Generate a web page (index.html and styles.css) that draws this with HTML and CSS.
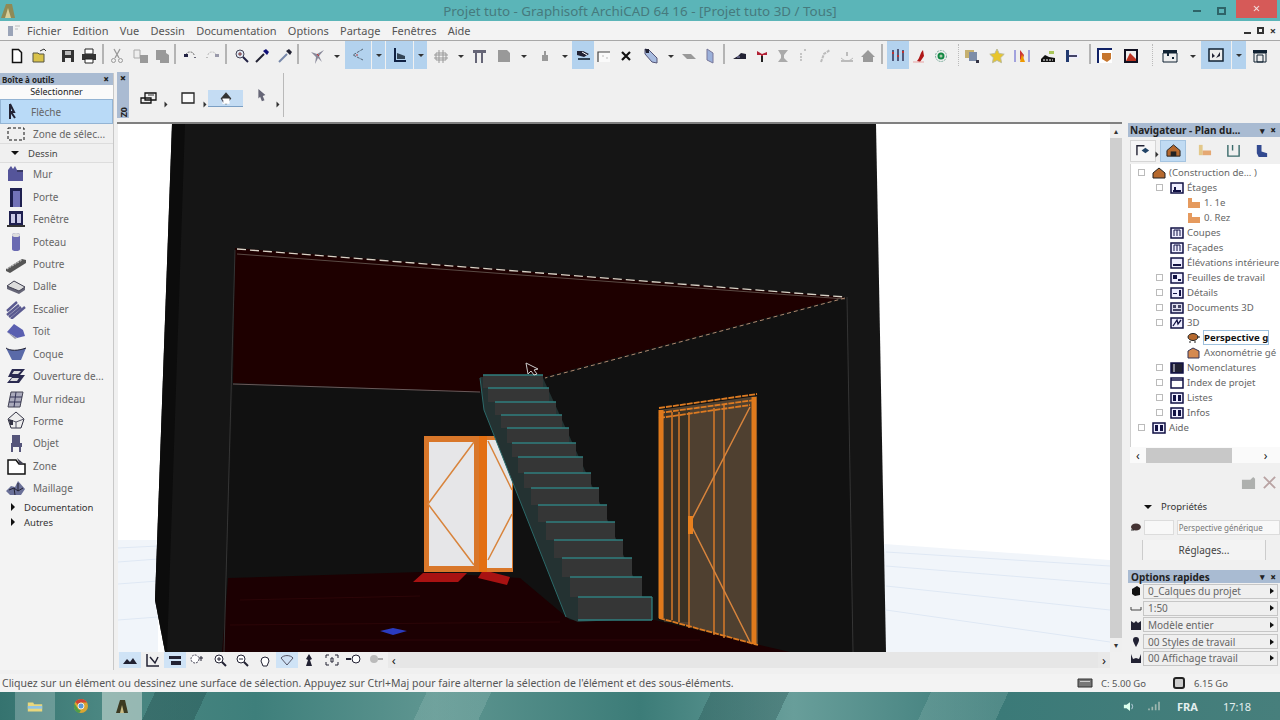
FILE: index.html
```html
<!DOCTYPE html>
<html lang="fr">
<head>
<meta charset="utf-8">
<title>Projet tuto - Graphisoft ArchiCAD 64 16</title>
<link rel="stylesheet" href="styles.css">
</head>
<body>
<div class="app">
  <header class="titlebar">
    <svg class="appicon" viewBox="0 0 16 16"><path d="M1 15 6 1h6l3 14z" fill="#8f8a55"/><path d="M5 15 8 5l3 10z" fill="#d8cf9a"/></svg>
    <div class="title">Projet tuto - Graphisoft ArchiCAD 64 16 - [Projet tuto 3D / Tous]</div>
    <div class="winctl">
      <span class="wmin"></span><span class="wmax"></span><span class="wclose">×</span>
    </div>
  </header>

  <nav class="menubar">
    <svg class="menuicon" viewBox="0 0 14 12"><path d="M1 1h5v10H1z" fill="#9aa4b8"/><path d="M8 1h5M8 4h3" stroke="#bbb"/></svg>
    <span>Fichier</span><span>Edition</span><span>Vue</span><span>Dessin</span><span>Documentation</span><span>Options</span><span>Partage</span><span>Fenêtres</span><span>Aide</span>
    <div class="mdictl"><i class="mdimin"></i><i class="mdimax"></i><i class="mdiclose">×</i></div>
  </nav>

  <div class="toolbar">
    <span class="b m8"><svg viewBox="0 0 16 16"><path d="M3.500 1.500h6l3 3v10h-9z" fill="#fff" stroke="#111" stroke-width="1.500"/></svg></span>
    <span class="b m5"><svg viewBox="0 0 16 16"><path d="M1 5h5l1 1h5v8H1z" fill="#d9c24a" stroke="#554"/><path d="M8 3l4-2 2 2" stroke="#333" fill="none"/></svg></span>
    <span class="b m10"><svg viewBox="0 0 16 16"><path d="M2 2h12v12H2z" fill="#333"/><path d="M5 3h6v4H5z" fill="#bbb"/><path d="M5 10h6v4H5z" fill="#eee"/></svg></span>
    <span class="b m3"><svg viewBox="0 0 16 16"><path d="M4 1h8v5H4z" fill="#fff" stroke="#222"/><path d="M1 6h14v6H1z" fill="#333"/><path d="M4 11h8v4H4z" fill="#fff" stroke="#222"/></svg></span>
    <span class="sep m4"></span>
    <span class="b m4 dim"><svg viewBox="0 0 16 16"><path d="M5 1l5 9M11 1l-5 9" stroke="#999" stroke-width="1.300"/><circle cx="4.500" cy="12.500" r="2" fill="none" stroke="#999"/><circle cx="11.500" cy="12.500" r="2" fill="none" stroke="#999"/></svg></span>
    <span class="b m6 dim"><svg viewBox="0 0 16 16"><path d="M1 2h6v8H1z" fill="#eee" stroke="#aaa"/><path d="M7 7h8v8H7z" fill="#999"/></svg></span>
    <span class="b m3 dim"><svg viewBox="0 0 16 16"><path d="M2 2h10v3l3 2v8H6v-3H2z" fill="#999"/></svg></span>
    <span class="sep m3"></span>
    <span class="b m5"><svg viewBox="0 0 16 16"><path d="M4 7a4 3 0 0 1 8 0" fill="none" stroke="#666" stroke-dasharray="2 1"/><path d="M2 6h4v3H2z" fill="#224"/><path d="M12 9h2v1h-2z" fill="#667"/></svg></span>
    <span class="b m4 dim"><svg viewBox="0 0 16 16"><path d="M4 7a4 3 0 0 1 8 0" fill="none" stroke="#bbb" stroke-dasharray="2 1"/><path d="M11 6h4v3h-4z" fill="#99a"/><path d="M2 9h2v1H2z" fill="#bbb"/></svg></span>
    <span class="sep m4"></span>
    <span class="b m6"><svg viewBox="0 0 16 16"><circle cx="6" cy="6" r="4" fill="#dfe8f4" stroke="#445"/><path d="M9 9l5 5" stroke="#224" stroke-width="2"/><path d="M4 6h4M6 4v4" stroke="#733"/></svg></span>
    <span class="b m2"><svg viewBox="0 0 16 16"><path d="M2 14l8-8" stroke="#223" stroke-width="2"/><path d="M9 3l4 4 2-3-3-3z" fill="#117"/></svg></span>
    <span class="b m5"><svg viewBox="0 0 16 16"><path d="M2 14l8-8" stroke="#78a" stroke-width="2"/><path d="M9 3l4 4 2-3-3-3z" fill="#223"/></svg></span>
    <span class="sep m3"></span>
    <span class="b m10"><svg viewBox="0 0 16 16"><path d="M1 4l6 2 7-4-5 6 3 6-4-4-3 6 1-7z" fill="#889"/><path d="M7 6l2 2" stroke="#c33"/></svg></span>
    <span class="dd m6"></span>
    <span class="bon split w26 m4"><svg viewBox="0 0 16 16"><path d="M13 2 3 8l10 5" fill="none" stroke="#567" stroke-dasharray="3 1"/><path d="M6 8h2" stroke="#b33"/></svg></span>
    <span class="bon ddon w13 m1"><i></i></span>
    <span class="bon split w27 m1"><svg viewBox="0 0 16 16"><path d="M3 1v13h11" fill="none" stroke="#124" stroke-width="2"/><path d="M5 6l8 3v3H5z" fill="#345"/></svg></span>
    <span class="bon ddon w13 m1"><i></i></span>
    <span class="b m5 dim"><svg viewBox="0 0 16 16"><path d="M3 5h10v7H3zM1 7h14M1 10h14M6 2v13M10 2v13" fill="none" stroke="#999"/></svg></span>
    <span class="dd m7"></span>
    <span class="b m5"><svg viewBox="0 0 16 16"><path d="M2 2h13v3H12v10h-2V5H6v10H4V5H2z" fill="#667"/></svg></span>
    <span class="b m7 dim"><svg viewBox="0 0 16 16"><path d="M2 2h9l3 3v9H2z" fill="#999"/></svg></span>
    <span class="dd m7"></span>
    <span class="b m8 dim"><svg viewBox="0 0 16 16"><path d="M7 3h2v4h2v6H5V7h2z" fill="#999"/></svg></span>
    <span class="dd m7"></span>
    <span class="bon w22 m3"><svg viewBox="0 0 16 16"><path d="M2 4h6l6 3-5 3-7-2z" fill="#223"/><path d="M3 12h12" stroke="#345" stroke-width="2"/><path d="M7 5l5 3" stroke="#fff"/></svg></span>
    <span class="b m1"><svg viewBox="0 0 16 16"><path d="M2 4h12v10H2z" fill="#fafafa"/><path d="M2 14V4h12" fill="none" stroke="#444" stroke-width="1.200"/><path d="M6 8h2M10 10h2" stroke="#bbb"/></svg></span>
    <span class="b m4"><svg viewBox="0 0 16 16"><path d="M4 4l8 8M12 4l-8 8" stroke="#111" stroke-width="2.200"/></svg></span>
    <span class="b m7"><svg viewBox="0 0 16 16"><path d="M2 1l4 1 8 8v5l-5-1-7-8z" fill="#a8bce0" stroke="#557"/><path d="M2 1h4v4H3z" fill="#223"/></svg></span>
    <span class="dd m7"></span>
    <span class="b m5 dim"><svg viewBox="0 0 16 16"><path d="M1 6h9l5 5H6z" fill="#999"/></svg></span>
    <span class="b m3"><svg viewBox="0 0 16 16"><path d="M5 1l6 4v10l-6-3z" fill="#9bb0da" stroke="#779"/></svg></span>
    <span class="sep m4"></span>
    <span class="b m6"><svg viewBox="0 0 16 16"><path d="M1 11l5-3 3-3 5 1v5H6z" fill="#223"/><path d="M5 9h3" stroke="#99c"/></svg></span>
    <span class="b m4"><svg viewBox="0 0 16 16"><path d="M3 3l5 3 5-2v3H9v7H7V7H3z" fill="#b22236"/><path d="M7 8h2v6H7z" fill="#222"/></svg></span>
    <span class="b m3 dim"><svg viewBox="0 0 16 16"><path d="M3 2h10l-4 5v3l4 4H3l3-4V7z" fill="#aaa"/></svg></span>
    <span class="b dim"><svg viewBox="0 0 16 16"><path d="M8 5v9M12 1v2" stroke="#999" stroke-dasharray="2 1"/></svg></span>
    <span class="b m6 dim"><svg viewBox="0 0 16 16"><path d="M4 14l3-8 6-4" stroke="#bbb" stroke-width="2" fill="none" stroke-dasharray="3 1"/></svg></span>
    <span class="b m4 dim"><svg viewBox="0 0 16 16"><path d="M8 4v4M2 13h12" stroke="#aaa" stroke-width="1.500"/><path d="M2 10q6 6 12 0" fill="none" stroke="#bbb"/></svg></span>
    <span class="b m3 dim"><svg viewBox="0 0 16 16"><path d="M8 2l7 7h-2v5H3V9H1z" fill="#999"/></svg></span>
    <span class="sep m4"></span>
    <span class="bon w22 m4"><svg viewBox="0 0 16 16"><path d="M3 3v11M8 2v12M13 3v11" stroke="#335" stroke-width="1.500"/><path d="M2 6h2M7 9h2M12 5h2" stroke="#b33" stroke-width="2"/></svg></span>
    <span class="b m2"><svg viewBox="0 0 16 16"><path d="M5 13c3-3 3-8 6-11l1 6-4 6z" fill="#b01818"/><path d="M1 14h11" stroke="#e9a3a3"/></svg></span>
    <span class="b m3"><svg viewBox="0 0 16 16"><circle cx="8" cy="8" r="5.500" fill="none" stroke="#7a9" stroke-dasharray="2 1"/><circle cx="8" cy="8" r="3.500" fill="#184"/><circle cx="8" cy="8" r="1.500" fill="#aca"/></svg></span>
    <span class="dots m8"></span>
    <span class="b m3"><svg viewBox="0 0 16 16"><path d="M1 2h9v8H1z" fill="#c5b070"/><path d="M5 4h8v9H5z" fill="#7d8da8"/><path d="M12 12h3v3h-3z" fill="#334"/></svg></span>
    <span class="b m7"><svg viewBox="0 0 16 16"><path d="M8 1l2.200 4.500 5 .7-3.600 3.500.9 5L8 12.400 3.500 14.700l.9-5L.8 6.200l5-.7z" fill="#e8c52c" stroke="#bb9"/></svg></span>
    <span class="b m7"><svg viewBox="0 0 16 16"><path d="M1 2h14v12H1z" fill="#eee"/><path d="M1 2v12M15 2v12" stroke="#55c"/><path d="M6 2l4 5-2 7-2-3z" fill="#c33"/><path d="M8 6l3 8H6z" fill="#e90"/></svg></span>
    <span class="b m8"><svg viewBox="0 0 16 16"><path d="M1 14v-3l4-4 4 2 6 1v4z" fill="#111"/><path d="M3 12h10" stroke="#fff" stroke-dasharray="2 1"/><path d="M9 3h5v3H9z" fill="#a9c65a"/></svg></span>
    <span class="b m6"><svg viewBox="0 0 16 16"><path d="M2 2h3v12H2z" fill="#223a70"/><path d="M5 6h10v4H5z" fill="#eef"/><path d="M5 7h8v2H5z" fill="#446"/></svg></span>
    <span class="sep m8"></span>
    <span class="b m5"><svg viewBox="0 0 16 16"><path d="M1 1h14v14H1z" fill="#fff"/><path d="M1 15V1h14" fill="none" stroke="#126" stroke-width="2"/><path d="M5 5h9v6l-4 3-5-3z" fill="#c6762e"/></svg></span>
    <span class="b m8"><svg viewBox="0 0 16 16"><path d="M1 1h14v14H1z" fill="#112"/><path d="M3 3h10v10H3z" fill="#eee"/><path d="M3 13l4-8 6 6v2z" fill="#b32"/></svg></span>
    <span class="dots m12"></span>
    <span class="b m7"><svg viewBox="0 0 16 16"><path d="M1 2h14v3H1z" fill="#123"/><path d="M1 5h14v9H1z" fill="#eee" stroke="#123"/><path d="M6 5v3M11 9v2" stroke="#123" stroke-width="2"/></svg></span>
    <span class="dd m10"></span>
    <span class="bon split w30 m4"><svg viewBox="0 0 16 16"><path d="M1 2h14v12H1z" fill="#eee" stroke="#123" stroke-width="1.500"/><path d="M4 6v5l3-2zM8 11l4-6v4z" fill="#223"/></svg></span>
    <span class="bon ddon w14 m1"><i></i></span>
    <span class="b m5"><svg viewBox="0 0 16 16"><path d="M1 2h14v3H1z" fill="#123"/><path d="M2 5h12v9H2z" fill="#eee" stroke="#123"/><path d="M5 7h6v7H5z" fill="none" stroke="#123"/></svg></span>
  </div>

  <main class="content">
    <aside class="toolbox">
      <div class="palhead"><span>Boîte à outils</span><b>×</b></div>
      <div class="grouptitle">Sélectionner</div>
      <div class="tool sel"><svg viewBox="0 0 20 20"><path d="M5 2v15M5 2l4 8h-3l4 6" fill="none" stroke="#223" stroke-width="2"/></svg><span>Flèche</span></div>
      <div class="tool zone"><svg viewBox="0 0 20 20"><path d="M2 4h16v12H2z" fill="none" stroke="#111" stroke-dasharray="3 2"/></svg><span>Zone de sélec...</span></div>
      <div class="section"><i class="tridown"></i><span>Dessin</span></div>
      <div class="tool"><svg viewBox="0 0 20 20"><path d="M2 6l3-4 2 3 2-3 2 4h6v11H2z" fill="#55559a"/><path d="M11 7h6" stroke="#223"/></svg><span>Mur</span></div>
      <div class="tool"><svg viewBox="0 0 20 20"><path d="M4 1h12v19H4z" fill="#1f2050"/><path d="M7 4h7v16H7z" fill="#7272b8"/></svg><span>Porte</span></div>
      <div class="tool"><svg viewBox="0 0 20 20"><path d="M3 2h14v15H3z" fill="#1f2050"/><path d="M5 5h4v9H5zM11 5h4v9h-4z" fill="#c9c9e6"/><path d="M1 16h18v2H1z" fill="#333"/></svg><span>Fenêtre</span></div>
      <div class="tool"><svg viewBox="0 0 20 20"><path d="M6 3a4 2 0 0 1 8 0v14a4 2 0 0 1-8 0z" fill="#6a6ab2"/><ellipse cx="10" cy="3" rx="4" ry="2" fill="#ddd"/></svg><span>Poteau</span></div>
      <div class="tool"><svg viewBox="0 0 20 20"><path d="M0 15 16 5l4 1v3L4 19l-4-2z" fill="#555"/><path d="M1 15 16 6" stroke="#ddd" stroke-dasharray="2 1"/></svg><span>Poutre</span></div>
      <div class="tool"><svg viewBox="0 0 20 20"><path d="M1 10l7-5 11 6v3l-6 4L1 13z" fill="#667"/><path d="M1 10l7-5 11 6-6 4z" fill="#ddd" stroke="#445"/></svg><span>Dalle</span></div>
      <div class="tool"><svg viewBox="0 0 20 20"><path d="M1 16l12-10M3 18l12-10M5 20l14-12M1 12l10-9" stroke="#5a5a90" stroke-width="2.400"/></svg><span>Escalier</span></div>
      <div class="tool"><svg viewBox="0 0 20 20"><path d="M1 11 8 3l9 6 2 6-8 2z" fill="#5a5fb0"/><path d="M1 11l10 6-2 1z" fill="#99a"/></svg><span>Toit</span></div>
      <div class="tool"><svg viewBox="0 0 20 20"><path d="M0 4c4 3 12 3 20 0l-5 12H6z" fill="#5a6aa8"/><path d="M0 4c4 3 12 3 20 0" stroke="#223" fill="none"/></svg><span>Coque</span></div>
      <div class="tool"><svg viewBox="0 0 20 20"><path d="M6 3h13l-5 6h5l-6 8H1l5-6H2z" fill="#2a2a50"/><path d="M8 5h7l-3 3H6zM6 12h7l-2 3H4z" fill="#ddd"/></svg><span>Ouverture de...</span></div>
      <div class="tool"><svg viewBox="0 0 20 20"><path d="M5 3h12l-3 15H2z" fill="#aab" stroke="#445"/><path d="M10 3 8 18M4 8h12M3 13h12" stroke="#335"/></svg><span>Mur rideau</span></div>
      <div class="tool"><svg viewBox="0 0 20 20"><path d="M10 1l8 7-3 9H5L2 8z" fill="#eee" stroke="#334"/><path d="M2 8l8 3 8-3M10 11v6" stroke="#556" fill="none"/><path d="M3 9h4v5H4z" fill="#334"/></svg><span>Forme</span></div>
      <div class="tool"><svg viewBox="0 0 20 20"><path d="M6 2h8v8h2v4h-1v5h-2v-5H7v5H5v-9h1z" fill="#55557a"/></svg><span>Objet</span></div>
      <div class="tool"><svg viewBox="0 0 20 20"><path d="M2 4h8l3 4h6v10H2z" fill="#fff" stroke="#111" stroke-width="1.500"/><path d="M11 2l6 5-3 2z" fill="#445"/></svg><span>Zone</span></div>
      <div class="tool"><svg viewBox="0 0 20 20"><path d="M0 13l5-5 4 1 3-6 7 8-4 6H4z" fill="#6a7098"/><path d="M3 12l5-2 4 3 5-3M8 10l1 7M12 5v8" stroke="#223" fill="none"/></svg><span>Maillage</span></div>
      <div class="section flat"><i class="triright"></i><span>Documentation</span></div>
      <div class="section flat"><i class="triright"></i><span>Autres</span></div>
    </aside>

    <section class="center">
      <div class="infobar">
        <div class="infohandle"><b>×</b><span>Z0</span></div>
        <span class="ib"><svg viewBox="0 0 18 14"><path d="M5 2h11v7H5zM1 7h10v5H1z" fill="none" stroke="#111" stroke-width="1.300"/><path d="M8 4h6" stroke="#333"/></svg></span><i class="tri"></i>
        <span class="ib g1"><svg viewBox="0 0 18 14"><path d="M3 2h12v10H3z" fill="#fafafa" stroke="#222" stroke-width="1.300"/></svg></span><i class="tri"></i>
        <span class="ib act"><svg viewBox="0 0 18 16"><path d="M9 1l6 7-6 7-6-7z" fill="#333"/><path d="M5 8h8v6H5z" fill="#fff"/><path d="M3 8l3 2v3z" fill="#556"/></svg></span>
        <span class="ib g2"><svg viewBox="0 0 18 16"><path d="M6 1l8 7-3 1 2 5-3 1-2-5-2 2z" fill="#667"/></svg></span><i class="tri"></i>
        <span class="vsep"></span>
      </div>
      <div class="viewrow">
        <div class="viewcol">
          <svg class="scene" viewBox="118 124 992 528" preserveAspectRatio="none" role="img" aria-label="Vue 3D">
            <rect x="118" y="124" width="992" height="528" fill="#fff"/>
            <path d="M118 540h40v112h-40zM884 544l226 16v92H884z" fill="#f1f5fa"/>
            <path d="M118 548l40-2M118 562l40-3M118 584l40-3M118 620l40-3M886 552l224 14M886 566l224 18M886 586l224 24M886 610l224 32" stroke="#dfe8f4" fill="none"/>
            <path d="M172 124h704l10 528H165l-10-52z" fill="#151515"/>
            <path d="M172 124h13l-18 528h-2l-10-52z" fill="#0c0c0c"/>
            <path d="M233 383 480 392 540 378 847 297l6 355H224z" fill="#111"/>
            <path d="M235 248 845 297 540 378 480 392 233 383z" fill="#1e0000"/>
            <path d="M228 578 420 572 520 578 570 620 655 620 760 645 790 652H222z" fill="#1c0002"/>
            <path d="M235 250 224 652M847 297 853 652" stroke="#353535" fill="none"/>
            <path d="M237 249 845 297" stroke="#d8d2c6" stroke-width="1.300" stroke-dasharray="9 4"/>
            <path d="M237 254 845 299" stroke="#5a4a44"/>
            <path d="M845 298 545 378" stroke="#b08a70" stroke-dasharray="4 3"/>
            <path d="M233 384 480 392" stroke="#6a5a5a"/>
            <path d="M240 600 420 596M230 625 560 622M300 640 700 640" stroke="#2c0508"/>
            <path d="M380 631l13-3 14 3-14 4z" fill="#2a3bc0"/>
            <path d="M413 582l10-9h44l-9 9zM478 578l5-8 27 7-3 8z" fill="#a81212"/>
            <path d="M424 436h89v136h-89z" fill="#d9772a"/>
            <path d="M429 442h45v124h-45zM487 440h25v128h-25z" fill="#e6e6e8"/>
            <path d="M474 442 428 504 474 565M488 441 512 490M488 560 512 514" stroke="#d8843c" stroke-width="1.500" fill="none"/>
            <path d="M479 436h8v136h-8z" fill="#e36f12"/>
            <path d="M659 410 757 396 758 645 659 618z" fill="#4f4030"/>
            <path d="M664 410h26v212h-26z" fill="#3b3225"/>
            <path d="M659 408 757 394M659 413 755 400M659 418 750 405M659 618 758 645" stroke="#dd7b22" stroke-width="1.800" fill="none" stroke-dasharray="6 1"/>
            <path d="M672 412v208M679 412v210M689 412v216M714 408v227M724 405v233" stroke="#d77a28" fill="none" stroke-width="1.500"/>
            <path d="M661 410v208" stroke="#e07a1c" stroke-width="5"/>
            <path d="M754 397v247" stroke="#e07a1c" stroke-width="5"/>
            <path d="M750 407 690 523 750 642" stroke="#d8843c" stroke-width="1.500" fill="none"/>
            <path d="M688 516h5v18h-5z" fill="#e8801e"/>
            <path d="M480 377 543 378 652 618 578 622 566 617 484 410z" fill="#243232"/>
            <path d="M480 378 484 410 566 617" stroke="#2c6a6a" fill="none"/>
            <g class="steps">
              <rect x="483" y="375" width="60" height="13"/><rect x="488" y="388" width="61" height="14"/><rect x="495" y="402" width="61" height="13"/>
              <rect x="501" y="415" width="61" height="13"/><rect x="507" y="428" width="62" height="15"/><rect x="512" y="443" width="64" height="14"/>
              <rect x="518" y="457" width="65" height="16"/><rect x="524" y="473" width="67" height="15"/><rect x="531" y="488" width="68" height="17"/>
              <rect x="538" y="505" width="69" height="17"/><rect x="546" y="522" width="69" height="18"/><rect x="554" y="540" width="69" height="18"/>
              <rect x="562" y="558" width="70" height="19"/><rect x="570" y="577" width="72" height="20"/><rect x="578" y="597" width="74" height="23"/>
            </g>
            <path class="nosings" d="M483 375h60M488 388h61M495 402h61M501 415h61M507 428h62M512 443h64M518 457h65M524 473h67M531 488h68M538 505h69M546 522h69M554 540h69M562 558h70M570 577h72M578 597h74M578 620h74M652 597v23"/>
            <path d="M526 363l2 11 3-3 3 4 3-1-3-4 4-1z" fill="none" stroke="#ccc"/>
          </svg>
          <div class="viewbar">
            <span class="vb on"><svg viewBox="0 0 16 14"><path d="M1 11l4-5 3 3 3-4 4 6z" fill="#223"/></svg></span>
            <span class="vb"><svg viewBox="0 0 16 14"><path d="M2 1v12h12M5 4l5 6 3-6" fill="none" stroke="#223" stroke-width="1.500"/></svg></span>
            <span class="vb on"><svg viewBox="0 0 16 14"><path d="M2 3h12v3H2zM4 8h10v4H4z" fill="#223"/></svg></span>
            <span class="vb"><svg viewBox="0 0 16 14"><circle cx="6" cy="6" r="4" fill="#fff" stroke="#445" stroke-dasharray="2 1"/><path d="M12 3v5M10 5h4" stroke="#223"/></svg></span>
            <span class="vb"><svg viewBox="0 0 16 14"><circle cx="7" cy="6" r="4" fill="#fff" stroke="#223"/><path d="M5 6h4M7 4v4" stroke="#223"/><path d="M10 9l4 4" stroke="#223" stroke-width="2"/></svg></span>
            <span class="vb"><svg viewBox="0 0 16 14"><circle cx="7" cy="6" r="4" fill="#fff" stroke="#223"/><path d="M5 6h4" stroke="#223"/><path d="M10 9l4 4" stroke="#223" stroke-width="2"/></svg></span>
            <span class="vb"><svg viewBox="0 0 16 14"><path d="M4 8a4 4 0 1 1 8 0l-2 5H6z" fill="#fff" stroke="#223"/></svg></span>
            <span class="vb on"><svg viewBox="0 0 16 14"><path d="M2 5a7 5 0 0 1 12 0l-6 7z" fill="#cfe0f4" stroke="#556"/></svg></span>
            <span class="vb"><svg viewBox="0 0 16 14"><path d="M8 1l3 5-2 1 2 6H5l2-6-2-1z" fill="#223"/></svg></span>
            <span class="vb"><svg viewBox="0 0 16 14"><path d="M2 2h3M11 2h3M2 12h3M11 12h3M2 2v3M14 2v3M2 9v3M14 9v3M7 5h2v4H7z" stroke="#223" fill="none"/></svg></span>
            <span class="vb"><svg viewBox="0 0 16 14"><circle cx="10" cy="6" r="4" fill="#fff" stroke="#223"/><path d="M0 6h5" stroke="#223" stroke-width="2"/></svg></span>
            <span class="vb"><svg viewBox="0 0 16 14"><circle cx="6" cy="6" r="4" fill="#bbb"/><path d="M10 6h5" stroke="#aaa" stroke-width="2"/></svg></span>
            <span class="arrow">‹</span>
            <div class="htrack"></div>
            <span class="arrow">›</span>
          </div>
        </div>
        <div class="vscroll"><span>▴</span><div class="vthumb"></div><span>▾</span></div>
      </div>
    </section>

    <aside class="rightpanel">
      <div class="palhead navhead"><span>Navigateur - Plan du...</span><em>▾</em><b>×</b></div>
      <div class="navtabs">
        <span class="nt box"><svg viewBox="0 0 18 16"><path d="M2 13V3h8" fill="none" stroke="#223" stroke-width="1.500"/><path d="M7 8l4-3 4 3-4 3z" fill="#246"/></svg></span><i class="tri"></i>
        <span class="nt on"><svg viewBox="0 0 18 16"><path d="M2 8l7-6 7 6v6H2z" fill="#b5692e" stroke="#222"/><path d="M6 9h6v5H6z" fill="#222"/></svg></span>
        <span class="nt m5"><svg viewBox="0 0 18 16"><path d="M3 2h4v11H3z" fill="#e3c88a"/><path d="M7 8h9v5H7z" fill="#e5a873"/></svg></span>
        <span class="nt m3"><svg viewBox="0 0 18 16"><path d="M3 2v12h12V2M8 2v6" fill="none" stroke="#3a6a6a" stroke-width="1.500"/></svg></span>
        <span class="nt m2"><svg viewBox="0 0 18 16"><path d="M4 2h5v7l6 2v4H6l-2-4z" fill="#334a90"/></svg></span>
      </div>
      <div class="tree">
        <div class="row l0"><i class="exp"></i><svg viewBox="0 0 14 12"><path d="M1 6l6-5 6 5v5H1z" fill="#b5692e" stroke="#222"/></svg><span>(Construction de... )</span></div>
        <div class="row l1"><i class="exp"></i><svg class="pl" viewBox="0 0 14 12"><path d="M1 1h12v10H1z" fill="#eef" stroke="#114" stroke-width="1.500"/><path d="M3 8h8v2H3z" fill="#114"/><path d="M4 5h2v3H4z" fill="#114"/></svg><span>Étages</span></div>
        <div class="row l2"><svg viewBox="0 0 14 12"><path d="M1 1h4v4h8v6H1z" fill="#e59a5e"/></svg><span>1. 1e</span></div>
        <div class="row l2"><svg viewBox="0 0 14 12"><path d="M1 1h4v4h8v6H1z" fill="#e59a5e"/></svg><span>0. Rez</span></div>
        <div class="row l1 noexp"><svg class="pl" viewBox="0 0 14 12"><path d="M1 1h12v10H1z" fill="#eef" stroke="#114" stroke-width="1.500"/><path d="M4 3v6M10 3v6M4 3h6M7 3v6" stroke="#114"/></svg><span>Coupes</span></div>
        <div class="row l1 noexp"><svg class="pl" viewBox="0 0 14 12"><path d="M1 1h12v10H1z" fill="#eef" stroke="#114" stroke-width="1.500"/><path d="M4 3v6M10 3v6M4 3h6M7 3v6" stroke="#114"/></svg><span>Façades</span></div>
        <div class="row l1 noexp"><svg class="pl" viewBox="0 0 14 12"><path d="M1 1h12v10H1z" fill="#eef" stroke="#114" stroke-width="1.500"/><path d="M3 7h8v2H3z" fill="#114"/></svg><span>Élévations intérieure</span></div>
        <div class="row l1"><i class="exp"></i><svg class="pl" viewBox="0 0 14 12"><path d="M1 1h12v10H1z" fill="#eef" stroke="#114" stroke-width="1.500"/><path d="M3 3h4v4H3zM8 7h3v2H8z" fill="#114"/></svg><span>Feuilles de travail</span></div>
        <div class="row l1"><i class="exp"></i><svg class="pl" viewBox="0 0 14 12"><path d="M1 1h12v10H1z" fill="#eef" stroke="#114" stroke-width="1.500"/><path d="M3 6h4v1H3zM9 3h2v6H9z" fill="#114"/></svg><span>Détails</span></div>
        <div class="row l1"><i class="exp"></i><svg class="pl" viewBox="0 0 14 12"><path d="M1 1h12v10H1z" fill="#dde" stroke="#114" stroke-width="1.500"/><path d="M3 3h3v3H3zM8 3h3v3H8zM3 7h8v2H3z" fill="#446"/></svg><span>Documents 3D</span></div>
        <div class="row l1"><i class="exp"></i><svg class="pl" viewBox="0 0 14 12"><path d="M1 1h12v10H1z" fill="#eef" stroke="#114" stroke-width="1.500"/><path d="M3 9l4-6 1 4 3-4" stroke="#114" fill="none" stroke-width="1.300"/></svg><span>3D</span></div>
        <div class="row l2 cur"><svg viewBox="0 0 14 12"><ellipse cx="6" cy="5" rx="5" ry="3.500" fill="#b5692e" stroke="#222"/><path d="M2 10h2M7 10h2M10 5h3" stroke="#222"/></svg><span>Perspective g</span></div>
        <div class="row l2"><svg viewBox="0 0 14 12"><path d="M1 4l5-3 6 3v7H1z" fill="#d58a50" stroke="#335"/></svg><span>Axonométrie gé</span></div>
        <div class="row l1"><i class="exp"></i><svg class="pl" viewBox="0 0 14 12"><path d="M1 1h12v10H1z" fill="#223" stroke="#114" stroke-width="1.500"/><path d="M4 2v8" stroke="#eef"/></svg><span>Nomenclatures</span></div>
        <div class="row l1"><i class="exp"></i><svg class="pl" viewBox="0 0 14 12"><path d="M1 1h12v10H1z" fill="#fff" stroke="#114" stroke-width="1.500"/><path d="M1 3h12" stroke="#114" stroke-width="1.500"/></svg><span>Index de projet</span></div>
        <div class="row l1"><i class="exp"></i><svg class="pl" viewBox="0 0 14 12"><path d="M1 1h12v10H1z" fill="#eef" stroke="#114" stroke-width="1.500"/><path d="M3 3h3v6H3zM8 3h3v6H8z" fill="#114"/></svg><span>Listes</span></div>
        <div class="row l1"><i class="exp"></i><svg class="pl" viewBox="0 0 14 12"><path d="M1 1h12v10H1z" fill="#eef" stroke="#114" stroke-width="1.500"/><path d="M3 3h3v6H3zM8 3h3v6H8z" fill="#114"/></svg><span>Infos</span></div>
        <div class="row l0"><i class="exp"></i><svg class="pl" viewBox="0 0 14 12"><path d="M1 1h12v10H1z" fill="#eef" stroke="#114" stroke-width="1.500"/><path d="M3 3h3v6H3zM8 3h3v6H8z" fill="#114"/></svg><span>Aide</span></div>
      </div>
      <div class="hscroll"><span>‹</span><div class="hthumb"></div><span>›</span></div>
      <div class="props">
        <div class="propbtns">
          <svg viewBox="0 0 16 16"><path d="M1 5h9l3-3 2 2v11H1z" fill="#aeb0ae"/></svg>
          <svg viewBox="0 0 16 16"><path d="M2 2l12 12M14 2 2 14" stroke="#b9a3a3" stroke-width="2"/></svg>
        </div>
        <div class="section"><i class="tridown"></i><span>Propriétés</span></div>
        <div class="propfields">
          <svg viewBox="0 0 12 10"><ellipse cx="6" cy="5" rx="5" ry="3.500" fill="#433"/><path d="M1 8h3" stroke="#222"/></svg>
          <span class="fshort"></span><span class="flong">Perspective générique</span>
        </div>
        <div class="propbtn">Réglages...</div>
      </div>
      <div class="palhead quickhead"><span>Options rapides</span><em>▾</em><b>×</b></div>
      <div class="quick">
        <div class="qrow"><svg viewBox="0 0 12 12"><path d="M2 4l5-3 3 2v7l-5 1-3-2z" fill="#111"/></svg><div class="qsel"><span>0_Calques du projet</span><i></i></div></div>
        <div class="qrow"><svg viewBox="0 0 12 12"><path d="M1 5v3h10V5" fill="none" stroke="#444"/></svg><div class="qsel"><span>1:50</span><i></i></div></div>
        <div class="qrow"><svg viewBox="0 0 12 12"><path d="M1 2l3 2 2-2 2 2 3-2v9H1z" fill="#223"/></svg><div class="qsel"><span>Modèle entier</span><i></i></div></div>
        <div class="qrow"><svg viewBox="0 0 12 12"><path d="M6 1a3 3 0 0 1 3 3c0 2-3 7-3 7S3 6 3 4a3 3 0 0 1 3-3z" fill="#223"/></svg><div class="qsel"><span>00 Styles de travail</span><i></i></div></div>
        <div class="qrow"><svg viewBox="0 0 12 12"><path d="M1 2l2 5 3-1 3 1 2-5v9H1z" fill="#223"/></svg><div class="qsel"><span>00 Affichage travail</span><i></i></div></div>
      </div>
    </aside>
  </main>

  <footer class="statusbar">
    <span class="stext">Cliquez sur un élément ou dessinez une surface de sélection. Appuyez sur Ctrl+Maj pour faire alterner la sélection de l'élément et des sous-éléments.</span>
    <svg class="disk" viewBox="0 0 16 10"><path d="M1 1h14v8H1z" fill="#777" stroke="#333"/><path d="M3 3h10v1H3z" fill="#ccc"/></svg>
    <span class="sval">C: 5.00 Go</span>
    <svg class="ram" viewBox="0 0 14 14"><rect x="2" y="2" width="10" height="10" rx="2" fill="#ccc" stroke="#222" stroke-width="2"/></svg>
    <span class="sval">6.15 Go</span>
  </footer>

  <div class="taskbar">
    <span class="task first"><svg viewBox="0 0 20 16"><path d="M2 4h6l1 2h9v8H2z" fill="#e9d77c"/><path d="M2 8h16v3H2z" fill="#8fc4e6"/></svg></span>
    <span class="task plain"><svg viewBox="0 0 16 16"><circle cx="8" cy="8" r="7" fill="#d9a632"/><path d="M8 1a7 7 0 0 1 6 3.500H8A3.500 3.500 0 0 0 4.800 6.500L2.200 3.800A7 7 0 0 1 8 1z" fill="#cf4436"/><path d="M1.500 5.500 5 11a4 4 0 0 0 3 1.500L6 15A7 7 0 0 1 1.500 5.500z" fill="#4f9e48"/><circle cx="8" cy="8" r="3" fill="#5b9ad6" stroke="#eee"/></svg></span>
    <span class="task open"><svg viewBox="0 0 16 16"><path d="M2 15 6 2h5l3 13z" fill="#3c3a22"/><path d="M6 15l2-8 2 8z" fill="#c8bb84"/></svg></span>
    <div class="tray">
      <svg class="vol" viewBox="0 0 16 12"><path d="M1 4h3l4-3v10L4 8H1z" fill="#dfe"/><path d="M10 3q2 3 0 6" stroke="#cde" fill="none"/></svg>
      <svg class="net" viewBox="0 0 16 12"><path d="M1 9h2v2H1zM5 7h2v4H5zM9 4h2v7H9zM13 1h2v10h-2z" fill="#9fb8b0"/></svg>
      <span class="lang">FRA</span>
      <span class="clock">17:18</span>
    </div>
  </div>
</div>
</body>
</html>
```
FILE: styles.css
```css
* { box-sizing: border-box; }
html, body { margin: 0; height: 100%; }
body { width: 1280px; height: 720px; overflow: hidden; font-family: "Noto Sans", "Liberation Sans", sans-serif; font-size: 10px; color: #333; background: #f0f0f0; }
svg { display: block; }
.app { display: flex; flex-direction: column; width: 1280px; height: 720px; filter: blur(0.6px); }

.titlebar { height: 21px; flex: none; background: #5bb5b8; display: flex; align-items: center; position: relative; }
.appicon { width: 16px; height: 16px; margin-left: 0; }
.title { position: absolute; left: 0; right: 0; text-align: center; font-size: 13.400px; color: #467a7d; }
.winctl { margin-left: auto; display: flex; align-items: center; position: relative; }
.wmin { width: 8px; height: 2px; background: #2e6468; margin-right: 16px; }
.wmax { width: 9px; height: 8px; border: 2px solid #2e6468; margin-right: 10px; }
.wclose { width: 41px; height: 18px; margin-top: -3px; margin-right: 3px; background: #d65a58; color: #f3dede; text-align: center; font-size: 13px; line-height: 17px; }

.menubar { height: 20px; flex: none; background: #f3f3f3; border-bottom: 1px solid #a8a8a8; display: flex; align-items: center; gap: 11.250px; font-size: 11px; color: #555; padding-left: 7px; }
.menuicon { width: 14px; height: 12px; margin-right: -5.250px; }
.mdictl { margin-left: auto; display: flex; align-items: center; gap: 6px; padding-right: 4px; }
.mdimin { width: 7px; height: 2px; background: #333; margin-top: 4px; }
.mdimax { width: 7px; height: 7px; border: 2px solid #333; }
.mdiclose { font-style: normal; font-weight: 700; font-size: 11px; color: #333; line-height: 10px; }

.toolbar { height: 30px; flex: none; background: #f0f0f0; display: flex; align-items: stretch; }
.b { width: 18px; display: flex; align-items: center; justify-content: center; }
.b svg { width: 16px; height: 16px; }
.bon { background: #b3d2ee; display: flex; align-items: center; justify-content: center; height: 28px; }
.bon svg { width: 16px; height: 16px; }
.ddon i, .dd::after, .tri { display: block; width: 0; height: 0; border-left: 3px solid transparent; border-right: 3px solid transparent; border-top: 3px solid #333; }
.dd { width: 8px; display: flex; align-items: center; justify-content: center; }
.dd::after { content: ""; }
.sep { width: 2px; margin-top: 3px; margin-bottom: 7px; background: #b4b4b4; }
.dots { width: 2px; margin-top: 3px; margin-bottom: 5px; border-left: 1px dotted #bbb; }
.w13 { width: 13px; } .w14 { width: 14px; } .w22 { width: 22px; } .w26 { width: 26px; } .w27 { width: 27px; } .w30 { width: 30px; }
.m1 { margin-left: 1px; } .m2 { margin-left: 2px; } .m3 { margin-left: 3px; } .m4 { margin-left: 4px; } .m5 { margin-left: 5px; } .m6 { margin-left: 6px; }
.m7 { margin-left: 7px; } .m8 { margin-left: 8px; } .m10 { margin-left: 10px; } .m12 { margin-left: 12px; }

.content { flex: 1; min-height: 0; display: flex; background: #f0f0f0; }

.palhead { height: 12px; background: #a9bbd2; color: #222; display: flex; align-items: center; justify-content: space-between; font-weight: 700; font-size: 8px; padding: 0 4px 0 2px; }
.palhead b { font-size: 10px; line-height: 10px; }
.palhead em { font-style: normal; margin-left: auto; margin-right: 5px; font-size: 9px; }

.toolbox { width: 114px; flex: none; margin-top: 2px; background: #f3f3f3; display: flex; flex-direction: column; border-right: 1px solid #c8c8c8; height: 597px; }
.grouptitle { height: 14px; text-align: center; font-size: 9px; line-height: 14px; color: #222; background: #fafafa; }
.tool { height: 22.450px; display: flex; align-items: center; padding-left: 5px; font-size: 10px; color: #666; }
.tool svg { width: 22px; height: 20px; flex: none; }
.tool span { margin-left: 6px; white-space: nowrap; }
.tool.sel { height: 25px; background: #b9daf7; border: 1px solid #93b4d4; padding-left: 4px; }
.tool.sel svg { width: 20px; }
.tool.zone { height: 20px; background: #f0f0f0; border-bottom: 1px solid #ddd; }
.section { height: 19px; display: flex; align-items: center; padding-left: 11px; font-size: 9.500px; color: #444; background: #f0f0f0; border-bottom: 1px solid #ddd; }
.section.flat { height: 15px; border: 0; background: none; color: #333; }
.section span { margin-left: 9px; }
.tridown { width: 0; height: 0; border-left: 4px solid transparent; border-right: 4px solid transparent; border-top: 4px solid #111; }
.triright { width: 0; height: 0; border-top: 4px solid transparent; border-bottom: 4px solid transparent; border-left: 4px solid #111; }

.center { flex: 1; min-width: 0; padding-left: 3px; display: flex; flex-direction: column; }
.infobar { height: 51px; flex: none; display: flex; align-items: center; }
.infohandle { width: 12px; height: 46px; margin-top: -3px; background: #aabbd2; display: flex; flex-direction: column; align-items: center; justify-content: space-between; font-size: 9px; font-weight: 700; color: #222; }
.infohandle b { line-height: 11px; font-size: 11px; }
.infohandle span { writing-mode: vertical-rl; transform: rotate(180deg); padding-top: 1px; }
.ib { width: 20px; height: 16px; margin-left: 11px; margin-top: 4px; }
.ib svg { width: 18px; height: 14px; }
.ib.g1 { margin-left: 10px; }
.ib.act { width: 35px; height: 17px; margin-left: 0; background: #c4dcf3; border-bottom: 1px solid #7b9fc4; display: flex; justify-content: center; align-items: center; }
.ib.act svg { width: 16px; height: 15px; }
.ib.g2 { margin-left: 9px; margin-top: 0; margin-bottom: 2px; }
.infobar .tri { margin-left: 3px; margin-top: 16px; transform: rotate(-90deg); }
.vsep { width: 1px; height: 44px; background: #b9b9b9; margin-top: -3px; margin-left: 2px; }

.viewrow { flex: 1; min-height: 0; display: flex; border-top: 2px solid #808080; width: 1005px; }
.viewcol { width: 992px; flex: none; margin-left: 1px; display: flex; flex-direction: column; }
.scene { width: 992px; height: 528px; flex: none; }
.steps rect { fill: #353636; }
.nosings { fill: none; stroke: #2f7f7f; stroke-width: 1.300; }
.viewbar { height: 16px; margin-left: 1px; display: flex; align-items: center; background: #e9e9e9; }
.vb { width: 22.400px; height: 16px; display: flex; align-items: center; justify-content: center; background: #f0f0f0; }
.vb.on { background: #cfe3f6; }
.vb svg { width: 16px; height: 14px; }
.arrow { width: 12px; text-align: center; font-size: 13px; line-height: 14px; color: #222; }
.htrack { flex: 1; height: 16px; background: #e6e6e6; }
.vscroll { width: 12px; display: flex; flex-direction: column; align-items: center; font-size: 8px; color: #333; background: #efefef; height: 528px; }
.vscroll span { height: 14px; line-height: 14px; }
.vthumb { flex: 1; width: 12px; background: #cfcfcf; }

.rightpanel { width: 152px; flex: none; margin-left: auto; display: flex; flex-direction: column; padding-top: 52px; background: #f0f0f0; }
.navhead { height: 14px; font-size: 10px; padding-left: 2px; }
.quickhead { height: 13px; font-size: 10px; margin-top: 5px; padding-left: 3px; }
.navtabs { height: 27px; display: flex; align-items: center; padding-left: 2px; }
.nt { width: 26px; height: 22px; display: flex; align-items: center; justify-content: center; }
.nt svg { width: 17px; height: 15px; }
.nt.box { border: 1px solid #d5d5d5; background: #f6f6f6; }
.nt.on { background: #c0dbf3; border: 1px solid #a5c4e0; margin-left: 0; }
.navtabs .tri { transform: rotate(-90deg); margin-top: 8px; margin-left: -2px; }
.tree { height: 283px; flex: none; background: #fff; margin-left: 2px; padding-top: 1px; overflow: hidden; border-left: 1px solid #d0d0d0; }
.row { height: 15px; display: flex; align-items: center; white-space: nowrap; font-size: 9.600px; color: #666; position: relative; }
.row svg { width: 14px; height: 12px; flex: none; margin-right: 3px; }
.l0 { padding-left: 7px; }
.l1 { padding-left: 25px; }
.l2 { padding-left: 56px; }
.l1.noexp { padding-left: 39px; }
.row .exp { width: 7px; height: 7px; border: 1px solid #bbb; margin-right: 7px; flex: none; }
.row.cur span { font-weight: 700; color: #111; outline: 1px solid #9ec0dd; }
.hscroll { height: 16px; flex: none; display: flex; align-items: center; margin-left: 2px; background: #fafafa; font-size: 12px; color: #222; padding: 0 6px; }
.hthumb { width: 86px; height: 15px; background: #c8c8c8; margin-left: 6px; margin-right: 32px; }
.props { height: 102px; flex: none; padding: 12px 0 0 2px; }
.propbtns { display: flex; justify-content: flex-end; gap: 6px; height: 16px; padding-right: 3px; }
.propbtns svg { width: 15px; height: 15px; }
.props .section { height: 19px; margin-top: 6px; background: none; border: 0; padding-left: 14px; color: #333; }
.propfields { display: flex; align-items: center; height: 20px; margin-top: 1px; }
.propfields svg { width: 12px; height: 10px; margin-right: 2px; }
.fshort { width: 30px; height: 15px; background: #f8f8f8; border: 1px solid #dcdcdc; }
.flong { width: 104px; height: 15px; margin-left: 3px; background: #f8f8f8; border: 1px solid #dcdcdc; font-size: 8px; line-height: 13px; color: #777; padding-left: 1px; white-space: nowrap; overflow: hidden; }
.propbtn { width: 124px; height: 20px; margin: 3px 0 0 12px; background: #f3f3f3; border-left: 1px solid #ccc; border-right: 1px solid #ccc; text-align: center; line-height: 20px; font-size: 10px; color: #444; }
.quick { display: flex; flex-direction: column; margin-left: 2px; }
.qrow { height: 16.750px; display: flex; align-items: center; }
.qrow svg { width: 12px; height: 12px; margin-right: 1px; flex: none; }
.qsel { width: 135px; height: 15px; background: #efefef; border: 1px solid #c6c6c6; display: flex; align-items: center; justify-content: space-between; padding: 0 3px 0 4px; font-size: 10px; color: #666; }
.qsel i { width: 0; height: 0; border-top: 3px solid transparent; border-bottom: 3px solid transparent; border-left: 4px solid #111; }

.statusbar { height: 18px; flex: none; display: flex; align-items: center; background: #f3f3f3; font-size: 10.500px; color: #555; padding-left: 2px; }
.stext { white-space: nowrap; width: 1075px; flex: none; }
.disk { width: 16px; height: 10px; margin-left: 0; }
.ram { width: 14px; height: 14px; margin-left: 26px; }
.sval { margin-left: 8px; font-size: 9.500px; white-space: nowrap; }

.taskbar { height: 28px; flex: none; display: flex; align-items: center; padding-left: 15px;
  background:
    linear-gradient(115deg, transparent 0 12%, rgba(30, 70, 70, .35) 12% 16%, transparent 16% 33%, rgba(150, 190, 185, .3) 33% 38%, transparent 38% 55%, rgba(30, 70, 70, .3) 55% 61%, transparent 61% 72%, rgba(150, 190, 185, .25) 72% 78%, transparent 78%),
    linear-gradient(90deg, #35736f 0%, #4b8782 8%, #3e7f7b 20%, #5f9691 34%, #3c7c78 50%, #689e9a 62%, #3b7a78 78%, #477f7c 100%); }
.task { width: 40px; height: 28px; display: flex; align-items: center; justify-content: center; background: rgba(190, 210, 210, .35); }
.task.first { margin-right: 4px; }
.task svg { width: 18px; height: 16px; }
.task.plain { background: none; width: 43px; }
.task.open { background: rgba(215, 225, 220, .55); }
.tray { margin-left: auto; display: flex; align-items: center; color: #e3efef; font-size: 11px; padding-right: 29px; }
.vol { width: 14px; height: 11px; margin-right: 10px; }
.net { width: 14px; height: 10px; margin-right: 16px; }
.lang { font-weight: 700; margin-right: 25px; }
```
